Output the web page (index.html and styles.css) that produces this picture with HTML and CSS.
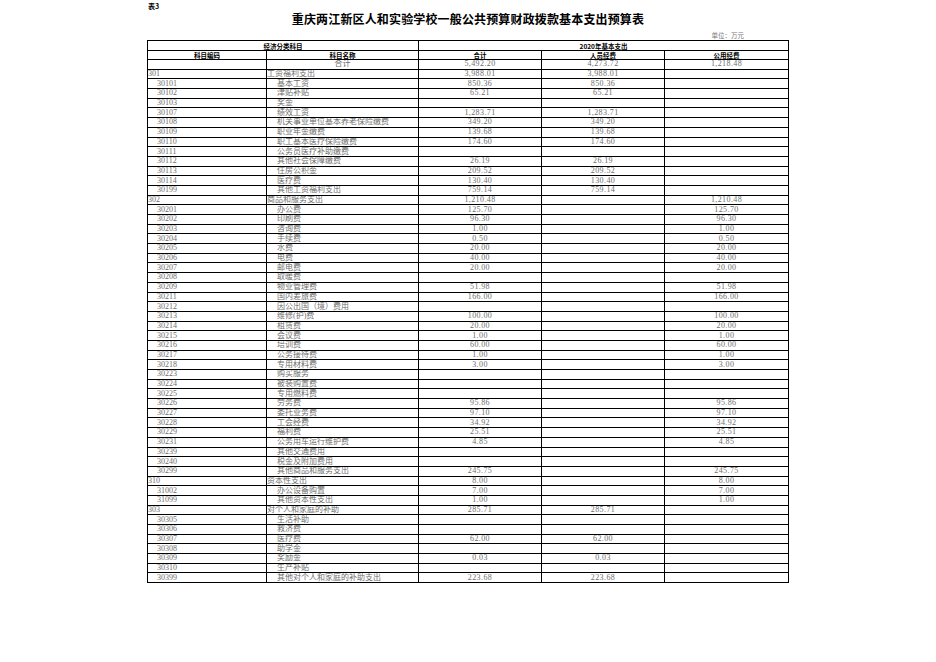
FILE: index.html
```html
<!DOCTYPE html>
<html lang="zh-CN">
<head>
<meta charset="utf-8">
<title>一般公共预算财政拨款基本支出预算表</title>
<link rel="stylesheet" href="styles.css">
</head>
<body>
<div class="page">
  <div class="tag">表3</div>
  <h1 class="title">重庆两江新区人和实验学校一般公共预算财政拨款基本支出预算表</h1>
  <div class="unit">单位：万元</div>
  <table class="sheet">
    <colgroup>
      <col class="c1"><col class="c2"><col class="c3"><col class="c4"><col class="c5">
    </colgroup>
    <thead>
      <tr class="h1"><th colspan="2">经济分类科目</th><th colspan="3">2020年基本支出</th></tr>
      <tr class="h2"><th>科目编码</th><th>科目名称</th><th>合计</th><th>人员经费</th><th>公用经费</th></tr>
    </thead>
    <tbody>
      <tr><td class="code"></td><td class="name total">合计</td><td class="num">5,492.20</td><td class="num">4,273.72</td><td class="num">1,218.48</td></tr>
      <tr><td class="code">301</td><td class="name">工资福利支出</td><td class="num">3,988.01</td><td class="num">3,988.01</td><td class="num"></td></tr>
      <tr><td class="code sub">30101</td><td class="name sub">基本工资</td><td class="num">850.36</td><td class="num">850.36</td><td class="num"></td></tr>
      <tr><td class="code sub">30102</td><td class="name sub">津贴补贴</td><td class="num">65.21</td><td class="num">65.21</td><td class="num"></td></tr>
      <tr><td class="code sub">30103</td><td class="name sub">奖金</td><td class="num"></td><td class="num"></td><td class="num"></td></tr>
      <tr><td class="code sub">30107</td><td class="name sub">绩效工资</td><td class="num">1,283.71</td><td class="num">1,283.71</td><td class="num"></td></tr>
      <tr><td class="code sub">30108</td><td class="name sub">机关事业单位基本养老保险缴费</td><td class="num">349.20</td><td class="num">349.20</td><td class="num"></td></tr>
      <tr><td class="code sub">30109</td><td class="name sub">职业年金缴费</td><td class="num">139.68</td><td class="num">139.68</td><td class="num"></td></tr>
      <tr><td class="code sub">30110</td><td class="name sub">职工基本医疗保险缴费</td><td class="num">174.60</td><td class="num">174.60</td><td class="num"></td></tr>
      <tr><td class="code sub">30111</td><td class="name sub">公务员医疗补助缴费</td><td class="num"></td><td class="num"></td><td class="num"></td></tr>
      <tr><td class="code sub">30112</td><td class="name sub">其他社会保障缴费</td><td class="num">26.19</td><td class="num">26.19</td><td class="num"></td></tr>
      <tr><td class="code sub">30113</td><td class="name sub">住房公积金</td><td class="num">209.52</td><td class="num">209.52</td><td class="num"></td></tr>
      <tr><td class="code sub">30114</td><td class="name sub">医疗费</td><td class="num">130.40</td><td class="num">130.40</td><td class="num"></td></tr>
      <tr><td class="code sub">30199</td><td class="name sub">其他工资福利支出</td><td class="num">759.14</td><td class="num">759.14</td><td class="num"></td></tr>
      <tr><td class="code">302</td><td class="name">商品和服务支出</td><td class="num">1,210.48</td><td class="num"></td><td class="num">1,210.48</td></tr>
      <tr><td class="code sub">30201</td><td class="name sub">办公费</td><td class="num">125.70</td><td class="num"></td><td class="num">125.70</td></tr>
      <tr><td class="code sub">30202</td><td class="name sub">印刷费</td><td class="num">96.30</td><td class="num"></td><td class="num">96.30</td></tr>
      <tr><td class="code sub">30203</td><td class="name sub">咨询费</td><td class="num">1.00</td><td class="num"></td><td class="num">1.00</td></tr>
      <tr><td class="code sub">30204</td><td class="name sub">手续费</td><td class="num">0.50</td><td class="num"></td><td class="num">0.50</td></tr>
      <tr><td class="code sub">30205</td><td class="name sub">水费</td><td class="num">20.00</td><td class="num"></td><td class="num">20.00</td></tr>
      <tr><td class="code sub">30206</td><td class="name sub">电费</td><td class="num">40.00</td><td class="num"></td><td class="num">40.00</td></tr>
      <tr><td class="code sub">30207</td><td class="name sub">邮电费</td><td class="num">20.00</td><td class="num"></td><td class="num">20.00</td></tr>
      <tr><td class="code sub">30208</td><td class="name sub">取暖费</td><td class="num"></td><td class="num"></td><td class="num"></td></tr>
      <tr><td class="code sub">30209</td><td class="name sub">物业管理费</td><td class="num">51.98</td><td class="num"></td><td class="num">51.98</td></tr>
      <tr><td class="code sub">30211</td><td class="name sub">国内差旅费</td><td class="num">166.00</td><td class="num"></td><td class="num">166.00</td></tr>
      <tr><td class="code sub">30212</td><td class="name sub">因公出国（境）费用</td><td class="num"></td><td class="num"></td><td class="num"></td></tr>
      <tr><td class="code sub">30213</td><td class="name sub">维修(护)费</td><td class="num">100.00</td><td class="num"></td><td class="num">100.00</td></tr>
      <tr><td class="code sub">30214</td><td class="name sub">租赁费</td><td class="num">20.00</td><td class="num"></td><td class="num">20.00</td></tr>
      <tr><td class="code sub">30215</td><td class="name sub">会议费</td><td class="num">1.00</td><td class="num"></td><td class="num">1.00</td></tr>
      <tr><td class="code sub">30216</td><td class="name sub">培训费</td><td class="num">60.00</td><td class="num"></td><td class="num">60.00</td></tr>
      <tr><td class="code sub">30217</td><td class="name sub">公务接待费</td><td class="num">1.00</td><td class="num"></td><td class="num">1.00</td></tr>
      <tr><td class="code sub">30218</td><td class="name sub">专用材料费</td><td class="num">3.00</td><td class="num"></td><td class="num">3.00</td></tr>
      <tr><td class="code sub">30223</td><td class="name sub">购买服务</td><td class="num"></td><td class="num"></td><td class="num"></td></tr>
      <tr><td class="code sub">30224</td><td class="name sub">被装购置费</td><td class="num"></td><td class="num"></td><td class="num"></td></tr>
      <tr><td class="code sub">30225</td><td class="name sub">专用燃料费</td><td class="num"></td><td class="num"></td><td class="num"></td></tr>
      <tr><td class="code sub">30226</td><td class="name sub">劳务费</td><td class="num">95.86</td><td class="num"></td><td class="num">95.86</td></tr>
      <tr><td class="code sub">30227</td><td class="name sub">委托业务费</td><td class="num">97.10</td><td class="num"></td><td class="num">97.10</td></tr>
      <tr><td class="code sub">30228</td><td class="name sub">工会经费</td><td class="num">34.92</td><td class="num"></td><td class="num">34.92</td></tr>
      <tr><td class="code sub">30229</td><td class="name sub">福利费</td><td class="num">25.51</td><td class="num"></td><td class="num">25.51</td></tr>
      <tr><td class="code sub">30231</td><td class="name sub">公务用车运行维护费</td><td class="num">4.85</td><td class="num"></td><td class="num">4.85</td></tr>
      <tr><td class="code sub">30239</td><td class="name sub">其他交通费用</td><td class="num"></td><td class="num"></td><td class="num"></td></tr>
      <tr><td class="code sub">30240</td><td class="name sub">税金及附加费用</td><td class="num"></td><td class="num"></td><td class="num"></td></tr>
      <tr><td class="code sub">30299</td><td class="name sub">其他商品和服务支出</td><td class="num">245.75</td><td class="num"></td><td class="num">245.75</td></tr>
      <tr><td class="code">310</td><td class="name">资本性支出</td><td class="num">8.00</td><td class="num"></td><td class="num">8.00</td></tr>
      <tr><td class="code sub">31002</td><td class="name sub">办公设备购置</td><td class="num">7.00</td><td class="num"></td><td class="num">7.00</td></tr>
      <tr><td class="code sub">31099</td><td class="name sub">其他资本性支出</td><td class="num">1.00</td><td class="num"></td><td class="num">1.00</td></tr>
      <tr><td class="code">303</td><td class="name">对个人和家庭的补助</td><td class="num">285.71</td><td class="num">285.71</td><td class="num"></td></tr>
      <tr><td class="code sub">30305</td><td class="name sub">生活补助</td><td class="num"></td><td class="num"></td><td class="num"></td></tr>
      <tr><td class="code sub">30306</td><td class="name sub">救济费</td><td class="num"></td><td class="num"></td><td class="num"></td></tr>
      <tr><td class="code sub">30307</td><td class="name sub">医疗费</td><td class="num">62.00</td><td class="num">62.00</td><td class="num"></td></tr>
      <tr><td class="code sub">30308</td><td class="name sub">助学金</td><td class="num"></td><td class="num"></td><td class="num"></td></tr>
      <tr><td class="code sub">30309</td><td class="name sub">奖励金</td><td class="num">0.03</td><td class="num">0.03</td><td class="num"></td></tr>
      <tr><td class="code sub">30310</td><td class="name sub">生产补贴</td><td class="num"></td><td class="num"></td><td class="num"></td></tr>
      <tr><td class="code sub">30399</td><td class="name sub">其他对个人和家庭的补助支出</td><td class="num">223.68</td><td class="num">223.68</td><td class="num"></td></tr>
    </tbody>
  </table>
</div>
</body>
</html>
```
FILE: styles.css
```css
html, body {
  margin: 0;
  padding: 0;
  background: #ffffff;
}

.page {
  display: flex;
  flex-direction: column;
  width: 642px;
  padding-left: 147px;
  font-family: "Liberation Serif", "Noto Sans CJK SC", serif;
}

.tag {
  height: 12px;
  line-height: 12px;
  padding-left: 1px;
  font-family: "Noto Sans CJK SC", sans-serif;
  font-weight: 700;
  font-size: 7px;
  color: #000;
}

.title {
  margin: 0;
  height: 14px;
  line-height: 14px;
  text-align: center;
  font-family: "Noto Sans CJK SC", sans-serif;
  font-weight: 700;
  font-size: 12px;
  letter-spacing: 0.15px;
  color: #000;
}

.unit {
  margin-top: 5px;
  height: 8px;
  line-height: 8px;
  text-align: right;
  padding-right: 45px;
  font-family: "Noto Sans CJK SC", sans-serif;
  font-size: 6.5px;
  color: #777;
}

.sheet {
  margin-top: 1px;
  width: 642px;
  table-layout: fixed;
  border-collapse: separate;
  border-spacing: 0;
  border-top: 1px solid #000;
  border-left: 1px solid #000;
}

.c1 { width: 119px; }
.c2 { width: 152px; }
.c3 { width: 123px; }
.c4 { width: 123px; }
.c5 { width: 124px; }

.sheet th,
.sheet td {
  padding: 0;
  border-right: 1px solid #000;
  border-bottom: 1px solid #000;
  overflow: hidden;
  white-space: nowrap;
  vertical-align: middle;
}

.sheet th {
  font-family: "Noto Sans CJK SC", sans-serif;
  font-weight: 700;
  font-size: 6.5px;
  line-height: 8px;
  color: #000;
  text-align: center;
}

.h1 { height: 10px; }
.h2 { height: 9px; }

.sheet tbody tr { height: 9.7px; }

.sheet td {
  font-size: 8px;
  line-height: 8px;
  color: #6e6e6e;
}

.code { text-align: left; padding-left: 1px; }
.code.sub { padding-left: 9px; }

.name { text-align: left; padding-left: 1px; }
.name.sub { padding-left: 10px; }
.name.total { text-align: center; padding-left: 0; }

.num { text-align: center; letter-spacing: 0.4px; }
```
